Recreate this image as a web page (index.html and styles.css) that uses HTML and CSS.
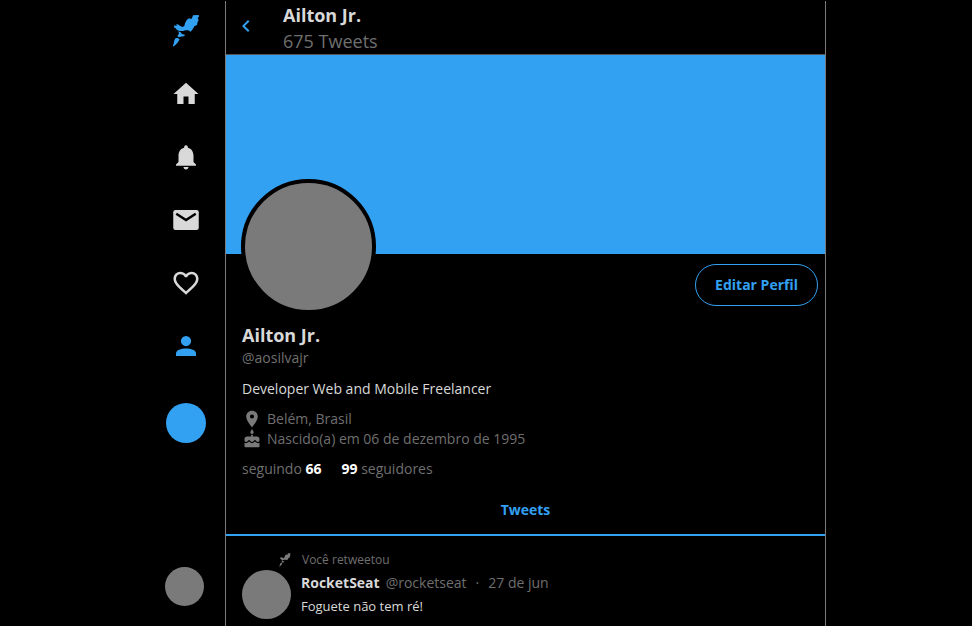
FILE: index.html
```html
<!DOCTYPE html>
<html lang="pt-BR">
<head>
<meta charset="utf-8">
<meta name="viewport" content="width=device-width, initial-scale=1">
<title>Ailton Jr.</title>
<link rel="stylesheet" href="styles.css">
</head>
<body>
<svg class="defs" aria-hidden="true">
  <symbol id="rocket" viewBox="0 6 126 126">
    <path d="M84 22L101 21L102 26L98 30L101 37L98 41L96 51L88 55L84 62L77 71L70 67H60L55 69L43 69L36 66L32 61L27 58L28 52L35 54L34 49L38 49L46 54L52 57L58 54L60 46L65 36L72 31L79 33L82 28Z"/>
    <path d="M40 70L47 73L51 78L61 81L56 85L47 86L41 88L37 84L42 77Z"/>
    <path d="M32 90L38 90L44 94L39 103L34 108L27 115L23 115L26 107L28 97Z"/>
  </symbol>
</svg>
<div class="layout">
  <nav class="menu" aria-label="Principal">
    <div class="menu-top">
      <a class="menu-item active" href="#" aria-label="Início"><svg class="rocket" aria-hidden="true"><use href="#rocket"/></svg></a>
      <a class="menu-item" href="#" aria-label="Página inicial"><svg viewBox="0 0 24 24"><path d="M10 20v-6h4v6h5v-8h3L12 3 2 12h3v8z"/></svg></a>
      <a class="menu-item" href="#" aria-label="Notificações"><svg viewBox="0 0 24 24"><path d="M12 22c1.1 0 2-.9 2-2h-4c0 1.1.9 2 2 2zm6-6v-5c0-3.07-1.64-5.64-4.500-6.320V4c0-.83-.67-1.500-1.500-1.500s-1.500.67-1.500 1.500v.68C7.630 5.360 6 7.920 6 11v5l-2 2v1h16v-1l-2-2z"/></svg></a>
      <a class="menu-item" href="#" aria-label="Mensagens"><svg viewBox="0 0 24 24"><rect x="1.800" y="4" width="20.400" height="16" rx="1.800"/><path class="flap" d="M4.200 7L12 12L19.800 7"/></svg></a>
      <a class="menu-item" href="#" aria-label="Favoritos"><svg viewBox="0 0 24 24"><path d="M16.500 3c-1.740 0-3.410.81-4.500 2.090C10.910 3.810 9.240 3 7.500 3 4.420 3 2 5.420 2 8.500c0 3.780 3.400 6.860 8.550 11.540L12 21.350l1.450-1.320C18.600 15.360 22 12.280 22 8.500 22 5.420 19.580 3 16.500 3zm-4.400 15.550l-.1.100-.1-.1C7.140 14.240 4 11.390 4 8.500 4 6.500 5.500 5 7.500 5c1.540 0 3.040.99 3.570 2.360h1.870C13.460 5.990 14.960 5 16.500 5c2 0 3.500 1.500 3.500 3.500 0 2.890-3.140 5.740-7.900 10.050z"/></svg></a>
      <a class="menu-item active" href="#" aria-label="Perfil"><svg viewBox="0 0 24 24"><circle cx="12" cy="8" r="4.100"/><path d="M4 20v-2.200C4 15.300 8 14 12 14s8 1.300 8 3.800V20z"/></svg></a>
      <button class="compose" type="button" aria-label="Tweetar"></button>
    </div>
    <div class="account"></div>
  </nav>
  <main class="feed">
    <header class="topbar">
      <a class="back" href="#" aria-label="Voltar"><svg viewBox="0 0 24 24"><path d="M15.400 7.400L14 6l-6 6 6 6 1.400-1.400L10.800 12z"/></svg></a>
      <div>
        <strong class="title">Ailton Jr.</strong>
        <span class="count">675 Tweets</span>
      </div>
    </header>
    <div class="banner"></div>
    <section class="profile">
      <div class="profile-top">
        <div class="avatar"></div>
        <button class="edit" type="button">Editar Perfil</button>
      </div>
      <h1 class="name">Ailton Jr.</h1>
      <div class="handle">@aosilvajr</div>
      <p class="bio">Developer Web and Mobile Freelancer</p>
      <ul class="facts">
        <li><svg viewBox="0 0 24 24"><path d="M12 2C8.130 2 5 5.130 5 9c0 5.250 7 13 7 13s7-7.750 7-13c0-3.870-3.130-7-7-7zm0 9.500a2.500 2.500 0 0 1 0-5 2.500 2.500 0 0 1 0 5z"/></svg>Belém, Brasil</li>
        <li><svg viewBox="0 0 24 24"><path d="M12 6c1.110 0 2-.9 2-2 0-.38-.1-.73-.29-1.030L12 0l-1.710 2.970c-.19.300-.29.650-.29 1.030 0 1.100.9 2 2 2zm4.600 9.990l-1.070-1.070-1.080 1.070c-1.300 1.300-3.580 1.310-4.890 0l-1.070-1.070-1.090 1.070C6.750 16.640 5.880 17 4.960 17c-.73 0-1.400-.23-1.960-.61V21c0 .55.450 1 1 1h16c.55 0 1-.45 1-1v-4.610c-.56.380-1.230.610-1.960.610-.92 0-1.790-.36-2.440-1.010zM18 9h-5V7h-2v2H6c-1.660 0-3 1.340-3 3v1.540c0 1.080.88 1.960 1.960 1.960.52 0 1.020-.2 1.380-.57l2.140-2.130 2.130 2.130c.74.740 2.030.740 2.770 0l2.140-2.130 2.130 2.130c.37.370.860.570 1.380.570 1.080 0 1.960-.88 1.960-1.960V12C21 10.340 19.660 9 18 9z"/></svg>Nascido(a) em 06 de dezembro de 1995</li>
      </ul>
      <div class="follow"><span>seguindo <strong>66</strong></span><span><strong>99</strong> seguidores</span></div>
    </section>
    <a class="tab" href="#">Tweets</a>
    <article class="tweet">
      <div class="retweet"><svg aria-hidden="true"><use href="#rocket"/></svg>Você retweetou</div>
      <div class="tweet-body">
        <div class="tweet-avatar"></div>
        <div>
          <div class="byline"><strong>RocketSeat</strong><span>@rocketseat</span><span class="dot">·</span><time>27 de jun</time></div>
          <p class="text">Foguete não tem ré!</p>
        </div>
      </div>
    </article>
  </main>
</div>
</body>
</html>
```
FILE: styles.css
```css
:root {
  --blue: #33a1f2;
  --gray: #7a7a7a;
  --muted: #6f6f6f;
  --white: #d9d9d9;
}
* { box-sizing: border-box; margin: 0; padding: 0; }
html, body { height: 100%; }
body {
  overflow: hidden;
  background: #000;
  color: var(--white);
  font: 14px/20px "Segoe UI", "Open Sans", "Noto Sans", sans-serif;
}
a { color: inherit; text-decoration: none; }
button { font: inherit; cursor: pointer; }
strong { font-weight: 700; }
svg { fill: currentColor; display: block; flex: none; }
.defs { position: absolute; width: 0; height: 0; }
.layout {
  display: flex;
  max-width: 680px;
  height: 100%;
  margin: 0 auto;
}
.menu {
  flex: 0 0 79px;
  display: flex;
  flex-direction: column;
  justify-content: space-between;
  padding: 16px 18px 20px 19px;
}
.menu-top {
  display: flex;
  flex-direction: column;
  align-items: center;
  gap: 33px;
}
.menu-item { height: 30px; display: flex; align-items: center; }
.menu-item svg { width: 30px; height: 30px; }
.menu-item .rocket { width: 42px; height: 42px; }
.flap { fill: none; stroke: #000; stroke-width: 2; }
.active { color: var(--blue); }
.compose {
  width: 40px;
  height: 40px;
  margin-top: 9px;
  border: 0;
  border-radius: 50%;
  background: var(--blue);
}
.account { width: 39px; height: 39px; border-radius: 50%; background: var(--gray); }
.feed {
  flex: 1;
  min-width: 0;
  margin-top: 1px;
  border: solid var(--gray);
  border-width: 0 1px;
}
.topbar {
  display: flex;
  align-items: center;
  gap: 25px;
  height: 54px;
  padding: 1px 8px 0;
  border-bottom: 1px solid #555;
}
.back { padding-bottom: 5px; color: var(--blue); }
.back svg { width: 24px; height: 24px; }
.title, .count { display: block; font-size: 18px; line-height: 26px; }
.count { color: var(--muted); }
.banner { height: 199px; background: var(--blue); }
.profile { padding: 0 7px 0 16px; }
.profile-top {
  display: flex;
  justify-content: space-between;
  align-items: flex-start;
  height: 70px;
  padding-top: 10px;
}
.avatar {
  width: 135px;
  height: 135px;
  margin: -85px 0 0 -1px;
  border: 4px solid #000;
  border-radius: 50%;
  background: var(--gray);
}
.edit {
  padding: 10px 19px;
  border: 1px solid var(--blue);
  border-radius: 21px;
  background: none;
  color: var(--blue);
  font-weight: 700;
}
.name { font-size: 18px; line-height: 22px; }
.handle { margin-top: 2px; color: var(--muted); }
.bio { margin-top: 11px; }
.facts { margin-top: 10px; list-style: none; color: var(--muted); }
.facts li { display: flex; align-items: center; gap: 5px; }
.facts svg { width: 20px; height: 20px; fill: var(--gray); }
.follow {
  display: flex;
  gap: 20px;
  margin-top: 10px;
  color: var(--muted);
}
.follow strong { color: #fff; }
.tab {
  display: block;
  margin-top: 11px;
  padding: 10px 0 14px;
  border-bottom: 2px solid var(--blue);
  color: var(--blue);
  font-weight: 700;
  text-align: center;
}
.tweet { padding: 14px 16px; }
.retweet {
  display: flex;
  align-items: center;
  gap: 8px;
  padding-left: 34px;
  color: var(--muted);
  font-size: 12px;
}
.retweet svg { width: 18px; height: 18px; fill: var(--gray); }
.tweet-body { display: flex; gap: 10px; }
.tweet-avatar {
  width: 49px;
  height: 49px;
  border-radius: 50%;
  background: var(--gray);
}
.byline { display: flex; gap: 6px; padding-top: 3px; color: var(--muted); }
.byline strong { color: var(--white); }
.dot { padding: 0 3px; }
.text { margin-top: 3px; font-size: 13px; }
```
